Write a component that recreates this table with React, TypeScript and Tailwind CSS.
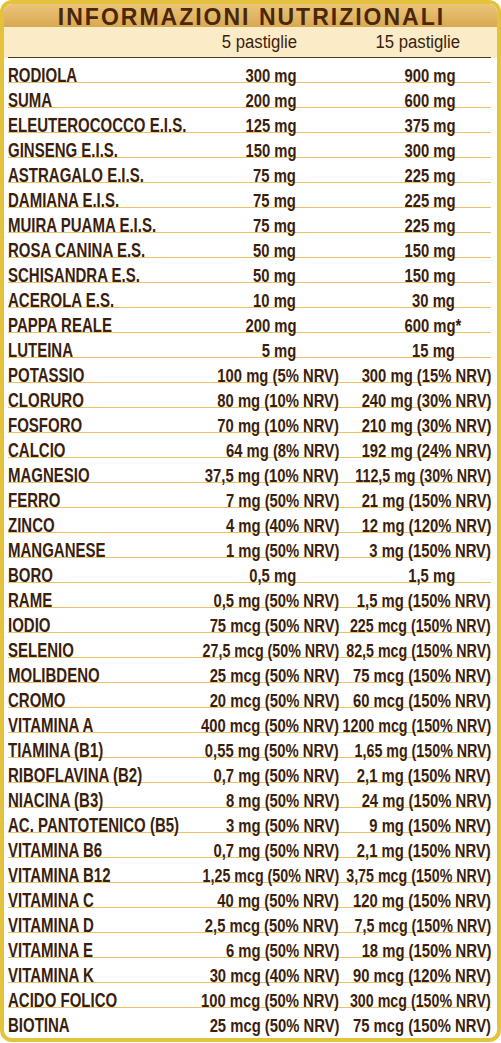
import React from "react";

type Row = { n: string; a: string; b: string; star?: boolean };

const rows: Row[] = [
  { n: "RODIOLA", a: "300 mg", b: "900 mg" },
  { n: "SUMA", a: "200 mg", b: "600 mg" },
  { n: "ELEUTEROCOCCO E.I.S.", a: "125 mg", b: "375 mg" },
  { n: "GINSENG E.I.S.", a: "150 mg", b: "300 mg" },
  { n: "ASTRAGALO E.I.S.", a: "75 mg", b: "225 mg" },
  { n: "DAMIANA E.I.S.", a: "75 mg", b: "225 mg" },
  { n: "MUIRA PUAMA E.I.S.", a: "75 mg", b: "225 mg" },
  { n: "ROSA CANINA E.S.", a: "50 mg", b: "150 mg" },
  { n: "SCHISANDRA E.S.", a: "50 mg", b: "150 mg" },
  { n: "ACEROLA E.S.", a: "10 mg", b: "30 mg" },
  { n: "PAPPA REALE", a: "200 mg", b: "600 mg", star: true },
  { n: "LUTEINA", a: "5 mg", b: "15 mg" },
  { n: "POTASSIO", a: "100 mg (5% NRV)", b: "300 mg (15% NRV)" },
  { n: "CLORURO", a: "80 mg (10% NRV)", b: "240 mg (30% NRV)" },
  { n: "FOSFORO", a: "70 mg (10% NRV)", b: "210 mg (30% NRV)" },
  { n: "CALCIO", a: "64 mg (8% NRV)", b: "192 mg (24% NRV)" },
  { n: "MAGNESIO", a: "37,5 mg (10% NRV)", b: "112,5 mg (30% NRV)" },
  { n: "FERRO", a: "7 mg (50% NRV)", b: "21 mg (150% NRV)" },
  { n: "ZINCO", a: "4 mg (40% NRV)", b: "12 mg (120% NRV)" },
  { n: "MANGANESE", a: "1 mg (50% NRV)", b: "3 mg (150% NRV)" },
  { n: "BORO", a: "0,5 mg", b: "1,5 mg" },
  { n: "RAME", a: "0,5 mg (50% NRV)", b: "1,5 mg (150% NRV)" },
  { n: "IODIO", a: "75 mcg (50% NRV)", b: "225 mcg (150% NRV)" },
  { n: "SELENIO", a: "27,5 mcg (50% NRV)", b: "82,5 mcg (150% NRV)" },
  { n: "MOLIBDENO", a: "25 mcg (50% NRV)", b: "75 mcg (150% NRV)" },
  { n: "CROMO", a: "20 mcg (50% NRV)", b: "60 mcg (150% NRV)" },
  { n: "VITAMINA A", a: "400 mcg (50% NRV)", b: "1200 mcg (150% NRV)" },
  { n: "TIAMINA (B1)", a: "0,55 mg (50% NRV)", b: "1,65 mg (150% NRV)" },
  { n: "RIBOFLAVINA (B2)", a: "0,7 mg (50% NRV)", b: "2,1 mg (150% NRV)" },
  { n: "NIACINA (B3)", a: "8 mg (50% NRV)", b: "24 mg (150% NRV)" },
  { n: "AC. PANTOTENICO (B5)", a: "3 mg (50% NRV)", b: "9 mg (150% NRV)" },
  { n: "VITAMINA B6", a: "0,7 mg (50% NRV)", b: "2,1 mg (150% NRV)" },
  { n: "VITAMINA B12", a: "1,25 mcg (50% NRV)", b: "3,75 mcg (150% NRV)" },
  { n: "VITAMINA C", a: "40 mg (50% NRV)", b: "120 mg (150% NRV)" },
  { n: "VITAMINA D", a: "2,5 mcg (50% NRV)", b: "7,5 mcg (150% NRV)" },
  { n: "VITAMINA E", a: "6 mg (50% NRV)", b: "18 mg (150% NRV)" },
  { n: "VITAMINA K", a: "30 mcg (40% NRV)", b: "90 mcg (120% NRV)" },
  { n: "ACIDO FOLICO", a: "100 mcg (50% NRV)", b: "300 mcg (150% NRV)" },
  { n: "BIOTINA", a: "25 mcg (50% NRV)", b: "75 mcg (150% NRV)" },
];

function Value({ text, simple, col, star }: { text: string; simple: boolean; col: 2 | 3; star?: boolean }) {
  const pad = simple ? (col === 2 ? "pr-[45px]" : "pr-[36px]") : col === 2 ? "pr-[2px]" : "pr-0";
  const long = text.length >= 18;
  const scale = long ? "scale-x-[0.75]" : "scale-x-[0.78]";
  return (
    <div className={`flex justify-end whitespace-nowrap text-[19px] font-bold min-w-0 ${pad}`}>
      <span className={`relative inline-block shrink-0 origin-right ${scale}`}>
        {text}
        {star ? <span className="absolute left-full top-0">*</span> : null}
      </span>
    </div>
  );
}

export default function App() {
  return (
    <div className="w-[501px] h-[1042px] bg-white font-['Liberation_Sans',Arial,sans-serif] text-[#3a1e0e]">
      <div className="h-full border-4 border-[#e4c23c] rounded-[12px] overflow-hidden flex flex-col">
        <div className="h-[23px] shrink-0 bg-[linear-gradient(180deg,#ebc57a,#d9a852)] text-center text-[23px] leading-[26px] font-bold tracking-[2px] pl-[2px] text-[#4a270a] whitespace-nowrap">
          INFORMAZIONI NUTRIZIONALI
        </div>
        <div className="h-[31px] shrink-0 bg-[#fcebc7] pl-[4px] pr-[6px]">
          <div className="h-full border-b-[1.5px] border-[#5b3a1c] grid grid-cols-[1fr_150px_150px] text-[18px] leading-[30px] text-[#3a1e0e]">
            <div />
            <div className="flex justify-end pr-[44px] whitespace-nowrap">
              <span className="inline-block shrink-0 origin-right scale-x-[0.93]">5 pastiglie</span>
            </div>
            <div className="flex justify-end pr-[31px] whitespace-nowrap">
              <span className="inline-block shrink-0 origin-right scale-x-[0.93]">15 pastiglie</span>
            </div>
          </div>
        </div>
        <div className="pl-[4px] pr-[6px]">
          {rows.map((r, i) => {
            const simple = !r.a.includes("NRV");
            const last = i === rows.length - 1;
            return (
              <div
                key={r.n}
                className={`h-[25px] grid grid-cols-[1fr_150px_150px] items-start leading-[35px] ${
                  last ? "" : "border-b border-[#e8c463]"
                }`}
              >
                <div className="whitespace-nowrap text-[20px] font-bold min-w-0">
                  <span className="inline-block origin-left scale-x-[0.75]">{r.n}</span>
                </div>
                <Value text={r.a} simple={simple} col={2} />
                <Value text={r.b} simple={simple} col={3} star={r.star} />
              </div>
            );
          })}
        </div>
      </div>
    </div>
  );
}
